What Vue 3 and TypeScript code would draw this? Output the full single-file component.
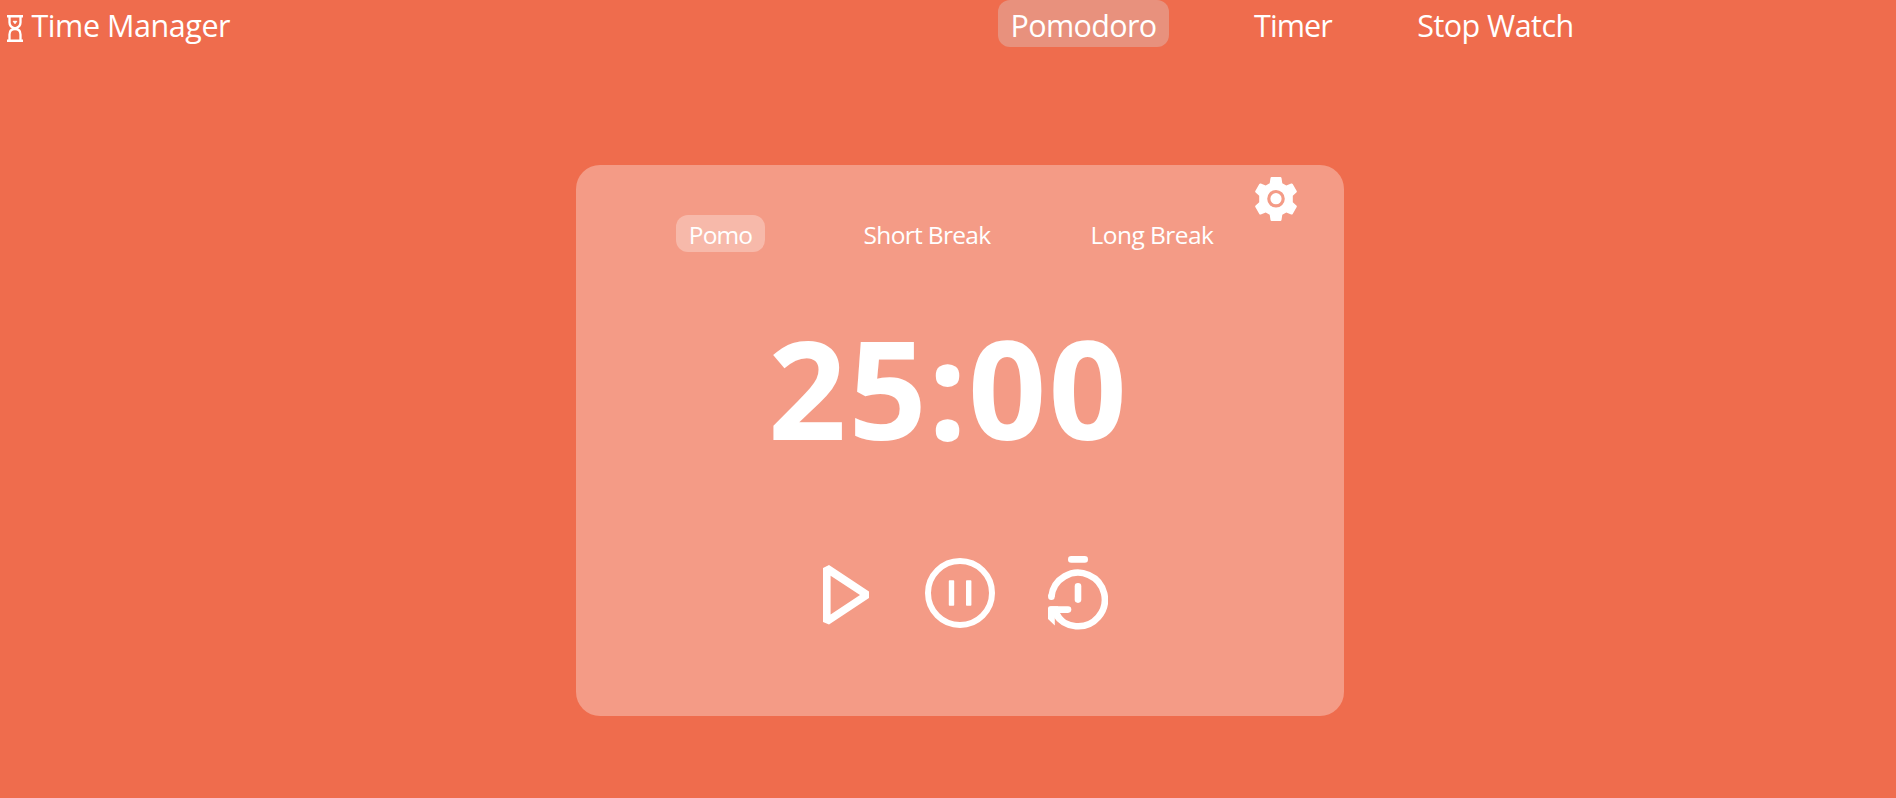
<script setup lang="ts">
import { computed, ref } from 'vue'

type Mode = 'pomo' | 'short' | 'long'

const pages = [
  { id: 'pomodoro', label: 'Pomodoro' },
  { id: 'timer', label: 'Timer' },
  { id: 'stopwatch', label: 'Stop Watch' },
]
const modes: { id: Mode; label: string; minutes: number }[] = [
  { id: 'pomo', label: 'Pomo', minutes: 25 },
  { id: 'short', label: 'Short Break', minutes: 5 },
  { id: 'long', label: 'Long Break', minutes: 15 },
]

const page = ref('pomodoro')
const mode = ref<Mode>('pomo')
const seconds = ref(25 * 60)
let handle: number | undefined

const digits = computed(() => {
  const m = String(Math.floor(seconds.value / 60)).padStart(2, '0')
  const s = String(seconds.value % 60).padStart(2, '0')
  return `${m}:${s}`.split('')
})

function pause() {
  window.clearInterval(handle)
  handle = undefined
}
function play() {
  if (handle !== undefined) return
  handle = window.setInterval(() => {
    if (seconds.value > 0) seconds.value--
    else pause()
  }, 1000)
}
function reset() {
  pause()
  seconds.value = modes.find((m) => m.id === mode.value)!.minutes * 60
}
function select(id: Mode) {
  mode.value = id
  reset()
}
</script>

<template>
  <div class="app">
    <header class="bar">
      <div class="brand">
        <svg class="glass" width="16" height="27" viewBox="0 0 16 27" fill="none" stroke="#fff">
          <path d="M0 1.3H16M0 25.7H16" stroke-width="2.6" />
          <path d="M2.5 2V7.5C2.5 10.6 4.4 12.4 8 13.3C11.6 12.4 13.5 10.6 13.5 7.5V2M2.5 25V19.5C2.5 16 4.6 14 8 14C11.4 14 13.5 16 13.5 19.5V25" stroke-width="2.3" />
          <path d="M6.2 6.3H9.8L8 8.7Z" fill="#fff" stroke-width="1" />
        </svg>
        <span class="name">Time Manager</span>
      </div>
      <nav class="pages">
        <button
          v-for="p in pages"
          :key="p.id"
          :class="['page', p.id, { active: page === p.id }]"
          @click="page = p.id"
        >{{ p.label }}</button>
      </nav>
    </header>

    <main class="card">
      <div class="top">
        <button class="icon" aria-label="Settings">
          <svg width="42" height="44" viewBox="0 0 42 44">
            <path fill="#fff" d="M16.6 0H25.4Q26.3 0 26.5 1L27.3 6.2L31.3 8.5L36.2 6.5Q37.2 6.2 37.7 7L41.7 14Q42.1 14.8 41.4 15.4L37.8 18.8V25.2L41.4 28.6Q42.1 29.2 41.7 30L37.7 37Q37.2 37.8 36.2 37.5L31.3 35.5L27.3 37.8L26.5 43Q26.3 44 25.4 44H16.6Q15.7 44 15.5 43L14.7 37.8L10.7 35.5L5.8 37.5Q4.8 37.8 4.3 37L.3 30Q-.1 29.2 .6 28.6L4.2 25.2V18.8L.6 15.4Q-.1 14.8 .3 14L4.3 7Q4.8 6.2 5.8 6.5L10.7 8.5L14.7 6.2L15.5 1Q15.7 0 16.6 0Z" />
            <circle cx="21" cy="21.7" r="7.2" fill="none" stroke="#f49b86" stroke-width="3.2" />
          </svg>
        </button>
      </div>

      <div class="modes">
        <button
          v-for="m in modes"
          :key="m.id"
          :class="['mode', m.id, { active: mode === m.id }]"
          @click="select(m.id)"
        >{{ m.label }}</button>
      </div>

      <div class="clock">
        <span v-for="(d, i) in digits" :key="i" :class="d === ':' ? 'colon' : 'digit'">{{ d }}</span>
      </div>

      <div class="controls">
        <button class="icon" aria-label="Play" @click="play">
          <svg width="46" height="60" viewBox="0 0 46 60">
            <path d="M0 3L6 0L46 26.5V33L6 59.6L0 57ZM7.6 10.8V49.6L37 30Z" fill="#fff" fill-rule="evenodd" />
          </svg>
        </button>
        <button class="icon" aria-label="Pause" @click="pause">
          <svg width="70" height="70" viewBox="0 0 70 70">
            <circle cx="35" cy="35" r="32" fill="none" stroke="#fff" stroke-width="6" />
            <rect x="23.8" y="22.3" width="5.4" height="25.5" rx=".8" fill="#fff" />
            <rect x="41" y="22.3" width="5.4" height="25.5" rx=".8" fill="#fff" />
          </svg>
        </button>
        <button class="icon" aria-label="Reset" @click="reset">
          <svg width="60" height="74" viewBox="0 0 60 74" fill="none" stroke="#fff" stroke-width="6.6" stroke-linecap="round">
            <path d="M23.3 3.4H36.7" />
            <path d="M30 30.4V43.6" />
            <path d="M3.4 40.7A26.8 26.8 0 1 1 7.2 57.5" stroke-linecap="butt" />
            <path d="M3.4 40.7V40.6" />
            <path d="M20 53.6H3.8" />
            <path d="M2 50.3H10L12 56.9C14 60.5 16 62.8 18.5 65L14 67C11 65 9 62.6 6.8 60V69.5L0 63V52.3Q0 50.3 2 50.3Z" fill="#fff" stroke="none" />
          </svg>
        </button>
      </div>
    </main>
  </div>
</template>

<style>
body {
  background: #ef6c4d;
}
</style>

<style scoped>
.app {
  box-sizing: border-box;
  height: 798px;
  overflow: hidden;
  background: #ef6c4d;
  color: #fff;
  font-family: 'Open Sans', 'Noto Sans', sans-serif;
}
button {
  border: 0;
  padding: 0;
  background: none;
  color: inherit;
  font: inherit;
  white-space: nowrap;
  cursor: pointer;
}
svg {
  display: block;
}
.bar {
  display: flex;
  height: 47px;
}
.brand {
  display: flex;
  width: 998px;
  padding-left: 7px;
  box-sizing: border-box;
  font-size: 30.5px;
  line-height: 50px;
}
.glass {
  margin: 15px 8.5px 0 0;
}
.name {
  letter-spacing: -0.45px;
}
.pages {
  display: flex;
}
.page {
  height: 47px;
  border-radius: 12px;
  font-size: 30.5px;
  line-height: 50px;
  letter-spacing: -0.65px;
}
.page.active {
  background: #e8917d;
}
.pomodoro {
  width: 171px;
}
.timer {
  width: 104px;
  margin-left: 72px;
  letter-spacing: -0.9px;
}
.stopwatch {
  width: 181px;
  margin-left: 60px;
  letter-spacing: -0.55px;
}
.card {
  width: 768px;
  height: 551px;
  margin: 118px 0 0 576px;
  border-radius: 24px;
  background: #f49b86;
}
.top {
  display: flex;
  justify-content: flex-end;
  height: 50px;
  padding: 12px 47px 0 0;
  box-sizing: border-box;
}
.modes {
  display: flex;
  padding-left: 100px;
}
.mode {
  height: 37px;
  border-radius: 12px;
  font-size: 24.5px;
  line-height: 40px;
  letter-spacing: -0.68px;
}
.mode.active {
  background: #f7b9aa;
}
.pomo {
  width: 89px;
  letter-spacing: -0.9px;
}
.short {
  width: 152px;
  margin-left: 86px;
}
.long {
  width: 148px;
  margin-left: 75px;
  letter-spacing: -0.55px;
}
.clock {
  display: flex;
  height: 180px;
  margin: 45px 0 0 191px;
  font-size: 137px;
  font-weight: 700;
  line-height: 180px;
}
.digit {
  width: 80.5px;
  text-align: center;
}
.colon {
  width: 39px;
  text-align: center;
}
.controls {
  display: flex;
  align-items: flex-start;
  height: 80px;
  margin: 79px 0 0 247px;
}
.controls .icon:nth-child(1) {
  margin-top: 9px;
}
.controls .icon:nth-child(2) {
  margin: 2px 53px 0 56px;
}
</style>
